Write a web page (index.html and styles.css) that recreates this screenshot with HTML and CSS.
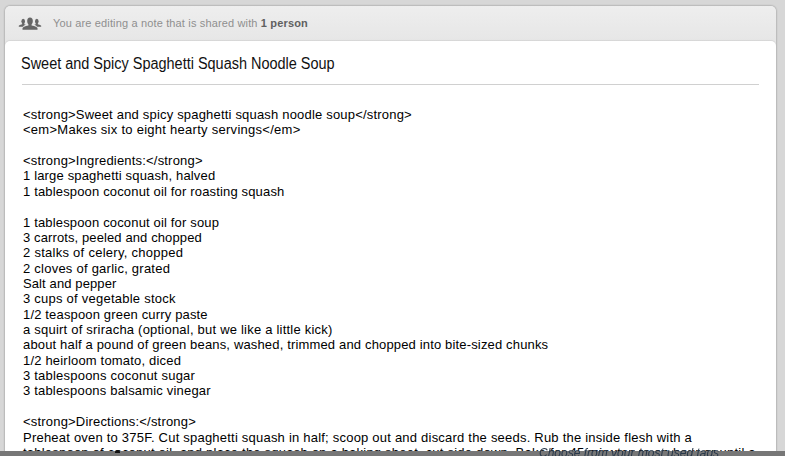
FILE: index.html
```
<!DOCTYPE html>
<html lang="en">
<head>
<meta charset="utf-8">
<title>Sweet and Spicy Spaghetti Squash Noodle Soup</title>
<link rel="stylesheet" href="styles.css">
</head>
<body>
<main class="note">
  <header class="share">
    <svg class="people" viewBox="0 0 24 14" width="24" height="14" aria-hidden="true">
      <ellipse cx="5.2" cy="4.2" rx="1.8" ry="2.5"/>
      <ellipse cx="18.8" cy="4.2" rx="1.8" ry="2.5"/>
      <path d="M.8 9.8V8.8Q1.2 8 4.2 7.2V5.5H6.2V7.2L7.8 7.8Q5.6 8.4 5 9.8Z"/>
      <path d="M23.2 9.8V8.8Q22.8 8 19.8 7.2V5.5H17.8V7.2L16.2 7.8Q18.4 8.4 19 9.8Z"/>
      <ellipse cx="12" cy="4" rx="2.8" ry="3.6"/>
      <path d="M4.5 12.8V11.2Q4.8 9.8 10.4 8.6V5.8H13.6V8.6Q19.2 9.8 19.5 11.2V12.8Z"/>
    </svg>
    <p class="share-text">You are editing a note that is shared with <b>1 person</b></p>
  </header>
  <article class="paper">
    <h1 class="title"><span class="title-text">Sweet and Spicy Spaghetti Squash Noodle Soup</span></h1>
    <div class="body">&lt;strong&gt;Sweet and spicy spaghetti squash noodle soup&lt;/strong&gt;
<span class="looser">&lt;em&gt;Makes six to eight hearty servings&lt;/em&gt;</span>

&lt;strong&gt;Ingredients:&lt;/strong&gt;
<span class="snug">1 large spaghetti squash, halved</span>
<span class="snug">1 tablespoon coconut oil for roasting squash</span>

<span class="snug">1 tablespoon coconut oil for soup</span>
<span class="tight">3 carrots, peeled and chopped</span>
<span class="looser">2 stalks of celery, chopped</span>
<span class="loose">2 cloves of garlic, grated</span>
<span class="tight">Salt and pepper</span>
<span class="loose">3 cups of vegetable stock</span>
<span class="snug">1/2 teaspoon green curry paste</span>
<span class="medium">a squirt of sriracha (optional, but we like a little kick)</span>
<span class="snug">about half a pound of green beans, washed, trimmed and chopped into bite-sized chunks</span>
1/2 heirloom tomato, diced
<span class="medium">3 tablespoons coconut sugar</span>
3 tablespoons balsamic vinegar

&lt;strong&gt;Directions:&lt;/strong&gt;
<span class="medium">Preheat oven to 375F. Cut spaghetti squash in half; scoop out and discard the seeds. Rub the inside flesh with a</span>
<span class="medium">tablespoon of coconut oil, and place the squash on a baking sheet, cut side down. Bake for 45 minutes to an hour or until a</span></div>
  </article>
</main>
<footer class="overlay"><span class="handle"></span><span class="tags">Choose from your most used tags</span></footer>
</body>
</html>
```
FILE: styles.css
```
* { box-sizing: border-box; }
html, body { height: 100%; overflow: hidden; }
body {
  margin: 0;
  padding: 6px 9px 0 5px;
  background: #d7d7d7;
  font-family: "Liberation Sans", Arial, sans-serif;
  color: #111;
}
.note {
  height: 470px;
  border-radius: 5px 5px 0 0;
  background: linear-gradient(#eeeeee, #e6e6e6 36px);
  box-shadow: 0 0 2px rgba(0, 0, 0, .45);
}
.share {
  display: flex;
  align-items: center;
  height: 35px;
  padding-left: 13px;
}
.people { fill: #666; }
.share-text {
  margin: 0 0 2px 11px;
  font-size: 11px;
  letter-spacing: .15px;
  color: #8f8f8f;
  white-space: nowrap;
}
.share-text b { color: #606060; }
.paper {
  height: 434px;
  padding: 0 17px;
  border-radius: 5px 5px 0 0;
  background: #fff;
  box-shadow: 0 -1px 1px rgba(0, 0, 0, .07);
}
.title {
  margin: 0;
  height: 44px;
  border-bottom: 1px solid #d0d0d0;
  font-size: 16px;
  font-weight: 400;
  line-height: 45px;
  white-space: nowrap;
}
.title-text {
  display: inline-block;
  margin-left: -1px;
  transform: scaleX(.904);
  transform-origin: left;
}
.body {
  padding: 22px 0 0 1px;
  font-size: 13px;
  line-height: 15.36px;
  letter-spacing: .19px;
  white-space: pre;
  color: #000;
}
.tight { letter-spacing: .11px; }
.snug { letter-spacing: .16px; }
.medium { letter-spacing: .217px; }
.loose { letter-spacing: .24px; }
.looser { letter-spacing: .27px; }
.overlay {
  position: fixed;
  left: 0;
  right: 0;
  bottom: 0;
  height: 5px;
  background: #777;
}
.handle {
  position: absolute;
  left: 115px;
  top: -1px;
  width: 5px;
  height: 3px;
  border-radius: 2px 2px 0 0;
  background: #111;
}
.tags {
  position: absolute;
  left: 539px;
  top: -5px;
  font-size: 12px;
  line-height: 14px;
  font-style: italic;
  color: #29394b;
  white-space: nowrap;
}
```
